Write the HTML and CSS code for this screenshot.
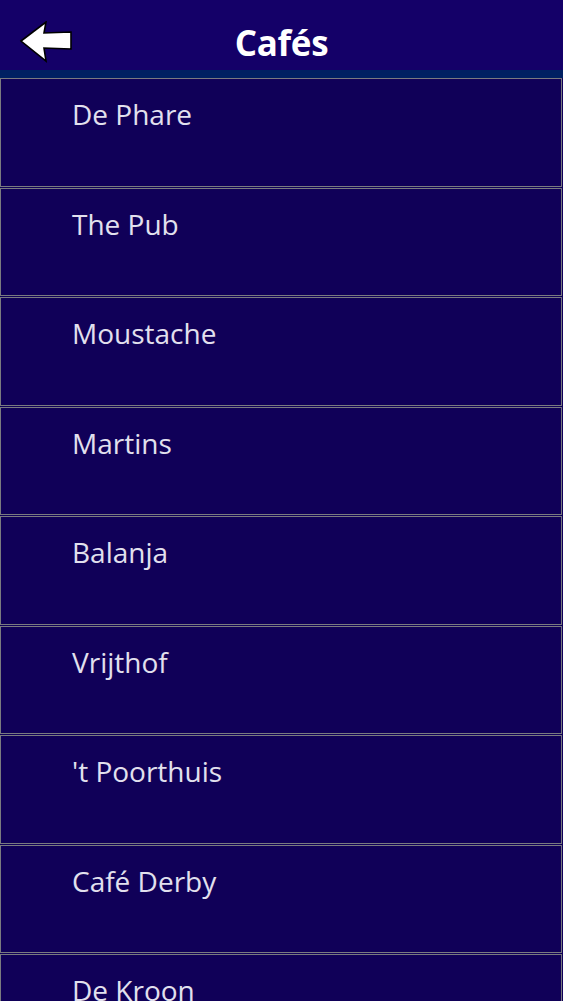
FILE: index.html
```html
<!DOCTYPE html>
<html>
<head>
<meta charset="utf-8">
<link rel="stylesheet" href="styles.css">
</head>
<body>
<header class="topbar">
  <svg class="back" width="56" height="44" viewBox="0 0 56 44">
    <polygon points="2,20 27,1 25,12 52,11 52,28 25,27 27,40" fill="#fff" stroke="#000" stroke-width="1.6" stroke-linejoin="miter"/>
  </svg>
  <h1 class="title">Cafés</h1>
</header>
<div class="stripe"></div>
<ul class="list">
  <li class="item">De Phare</li>
  <li class="item">The Pub</li>
  <li class="item">Moustache</li>
  <li class="item">Martins</li>
  <li class="item">Balanja</li>
  <li class="item">Vrijthof</li>
  <li class="item">'t Poorthuis</li>
  <li class="item">Café Derby</li>
  <li class="item">De Kroon</li>
</ul>
</body>
</html>
```
FILE: styles.css
```css
html, body {
  margin: 0;
  padding: 0;
  background: #100058;
  overflow: hidden;
  height: 1001px;
}
.topbar {
  position: relative;
  box-sizing: border-box;
  height: 70px;
  padding-top: 23px;
  background: #140068;
  display: flex;
  align-items: flex-start;
  justify-content: center;
}
.back {
  position: absolute;
  left: 19px;
  top: 21px;
}
.title {
  margin: 0;
  font-family: "Open Sans", "Noto Sans", sans-serif;
  font-weight: 700;
  font-size: 35px;
  line-height: 40px;
  color: #fff;
  letter-spacing: -0.3px;
}
.stripe {
  height: 8px;
  background: #002062;
}
.list {
  list-style: none;
  margin: 0;
  padding: 0;
  width: 562px;
}
.item {
  box-sizing: border-box;
  height: 108.5px;
  margin-bottom: 1px;
  border: 1px solid #7a7a80;
  background: #100058;
  color: #e2e0ee;
  font-family: "Open Sans", "Noto Sans", sans-serif;
  font-size: 28px;
  letter-spacing: 0;
  padding: 18px 0 0 71px;
  line-height: 34px;
  white-space: nowrap;
}
```
